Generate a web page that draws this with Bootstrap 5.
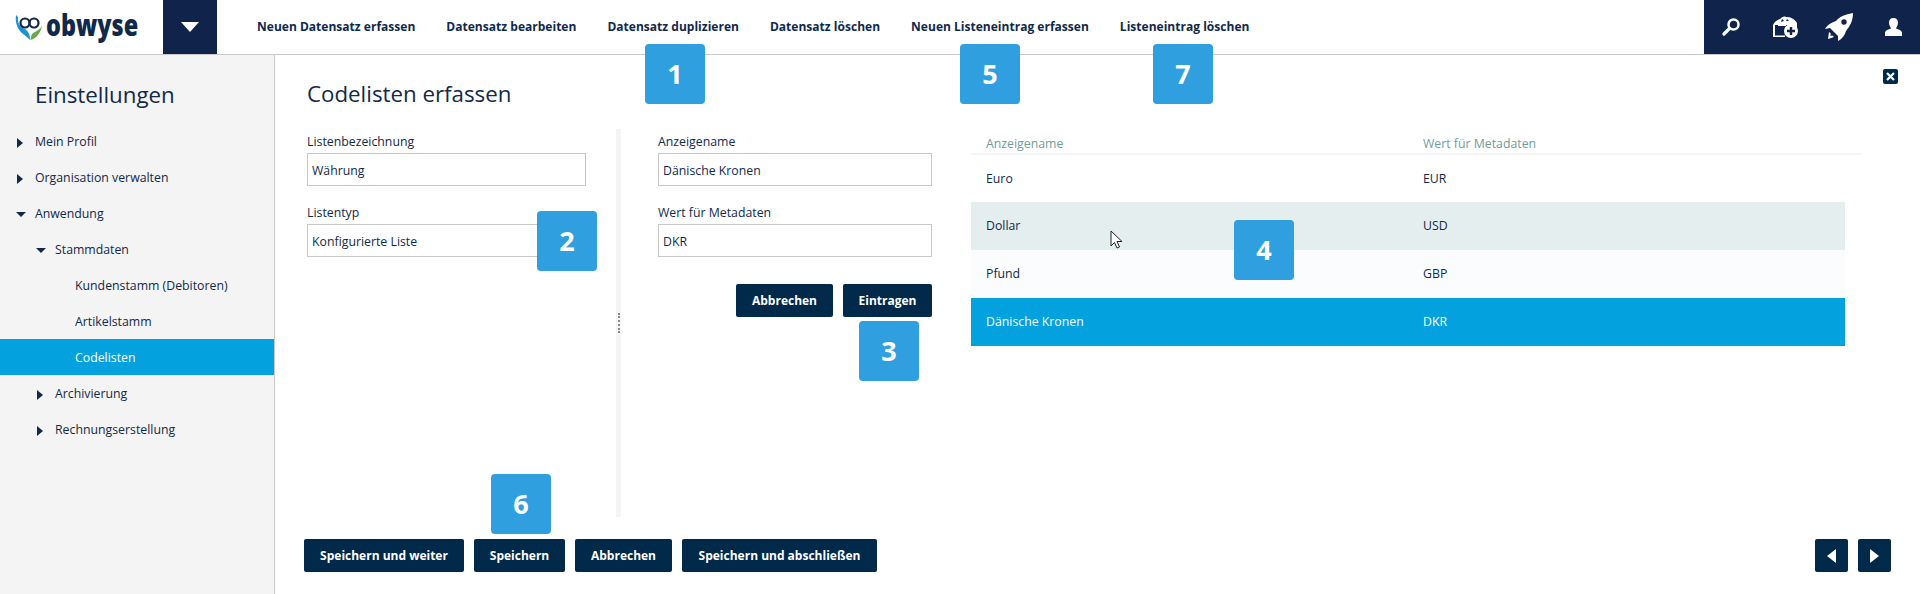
<!DOCTYPE html>
<html lang="de">
<head>
  <meta charset="UTF-8">
  <meta name="viewport" content="width=device-width, initial-scale=1">
  <title>Codelisten erfassen</title>
  <link href="https://cdn.jsdelivr.net/npm/bootstrap@5.3.2/dist/css/bootstrap.min.css" rel="stylesheet">
  <style>
    html, body { height: 594px; overflow: hidden; }
    body { font-family: "Open Sans", "Noto Sans", sans-serif; font-size: 12.3px; color: #12294a; background: #fff; }
    .top-bar { height: 55px; border-bottom: 1px solid #c8c8c8; }
    .logo-box { width: 163px; padding-left: 15px; }
    .logo-word { display: inline-block; font-weight: 800; font-size: 30px; color: #10294a; line-height: 1; margin: -4px 0 0 3px; transform: scaleX(.78); transform-origin: left center; }
    .menu-btn { width: 54px; height: 54px; background: #10234a; }
    .menu-btn i { border-left: 9px solid transparent; border-right: 9px solid transparent; border-top: 10px solid #fff; }
    .top-links { gap: 31px; padding-left: 40px; }
    .top-links a { font-size: 12px; font-weight: 700; color: #10294a; text-decoration: none; letter-spacing: .02px; }
    .tools { width: 216px; height: 54px; background: #10234a; padding-left: 18px; }
    .ic-box { margin-left: 32px; }
    .ic-rocket { margin-left: 26px; }
    .ic-user { margin-left: 31px; }
    .content-area { height: 539px; }
    .side { width: 275px; background: #f4f4f4; border-right: 1px solid #c8c8c8; }
    .side h2 { font-size: 22.3px; font-weight: 400; margin: 23px 0 11px 35px; line-height: 34px; }
    .tree-row { height: 36px; display: flex; align-items: center; padding-top: 3px; }
    .tree-row.l0 { padding-left: 35px; }
    .tree-row.l1 { padding-left: 55px; }
    .tree-row.l2 { padding-left: 75px; }
    .tree-row.on { background: #04a1df; color: #fff; }
    .tw-r, .tw-d { width: 0; height: 0; flex: none; display: block; }
    .tw-r { border-top: 5px solid transparent; border-bottom: 5px solid transparent; border-left: 6px solid #10294a; margin-left: -18px; margin-right: 12px; }
    .tw-d { border-left: 5px solid transparent; border-right: 5px solid transparent; border-top: 5px solid #10294a; margin-left: -19px; margin-right: 9px; }
    .work { position: relative; padding: 22px 0 0 32px; }
    .work h1 { font-size: 22.3px; font-weight: 400; line-height: 34px; margin: 0 0 21px; }
    .panes { height: 388px; }
    .pane-a { width: 279px; }
    .splitter { width: 5px; margin-left: 30px; margin-right: 37px; background: #f4f4f4; margin-top: -3px; height: 388px; position: relative; }
    .splitter i { position: absolute; left: 2px; top: 184px; height: 20px; border-left: 2px dotted #8a8a8a; }
    .pane-b { width: 274px; }
    .field-label { display: block; margin: 0 0 2px; padding-top: 1px; line-height: 18px; }
    .field-input.form-control { height: 33px; border: 1px solid #c8c8c8; border-radius: 0; padding: 1px 4px 0; font-size: 12.3px; color: #12294a; margin-bottom: 17px; }
    .entry-actions { gap: 10px; margin-top: 27px; }
    .dark-btn.btn { background: #00294a; border: 0; border-radius: 2px; color: #fff; font-size: 12px; font-weight: 700; height: 33px; padding: 0; }
    .w-cancel-a { width: 97px; }
    .w-enter { width: 89px; }
    .w-next { width: 160px; }
    .w-save { width: 91px; }
    .w-done { width: 195px; }
    .pane-c { width: 890px; margin-left: 39px; }
    .pane-c .table { width: 890px; margin: 0; table-layout: fixed; color: inherit; font-size: 12.3px; }
    .col-main { width: 437px; }
    .col-end { width: 16px; }
    .pane-c th { font-weight: 400; color: #6f9e9e; padding: 3px 0 0 15px; height: 22px; line-height: 18px; vertical-align: top; border: 0; border-bottom: 2px solid #f4f4f4; box-shadow: none; }
    .pane-c td { height: 48px; padding: 1px 0 0 15px; vertical-align: middle; border: 0; background: transparent; color: inherit; box-shadow: none; }
    .pane-c td.cell-end { padding: 0; background: #fff; }
    .row-hover td { background: #e5eeee; }
    .row-alt td { background: #fbfcfe; }
    .row-sel td { background: #04a1df; color: #fff; }
    .foot { position: absolute; left: 29px; right: 29px; top: 484px; }
    .foot-group { gap: 10px; }
    .pager { width: 33px; }
    .pager i { display: block; border-top: 7px solid transparent; border-bottom: 7px solid transparent; }
    .pager .prev { border-right: 9px solid #fff; }
    .pager .next { border-left: 9px solid #fff; }
    .close-x { position: absolute; top: 14px; right: 22px; width: 15px; height: 15px; background: #00294a; border-radius: 2px; }
    .step { position: absolute; width: 60px; height: 60px; background: #2f9fdf; color: #fff; border-radius: 4px; font-size: 27px; font-weight: 700; z-index: 5; }
    .step-1 { left: 645px; top: 44px; }
    .step-2 { left: 537px; top: 211px; }
    .step-3 { left: 859px; top: 321px; }
    .step-4 { left: 1234px; top: 220px; }
    .step-5 { left: 960px; top: 44px; }
    .step-6 { left: 491px; top: 474px; }
    .step-7 { left: 1153px; top: 44px; }
    .cursor-mark { position: absolute; left: 1110px; top: 230px; z-index: 6; }
  </style>
</head>
<body class="position-relative">

  <header class="top-bar d-flex">
    <div class="logo-box d-flex align-items-center">
      <svg width="28" height="27" viewBox="0 0 28 27" class="flex-shrink-0">
        <path d="M1 1C0 8 2 15 8 20c3 2 5 4 7 6 0-5-1-8-5-11C6 14 2 9 3 3z" fill="#1c93cf"/>
        <path d="M27 11c-1 5-7 6-10 9-1 2-1.500 4-1.500 6C20 25 26 20 27 11z" fill="#6aa84f"/>
        <circle cx="10" cy="9" r="4.500" fill="none" stroke="#10294a" stroke-width="2.200"/>
        <circle cx="19" cy="9" r="4.500" fill="none" stroke="#10294a" stroke-width="2.200"/>
      </svg>
      <span class="logo-word">obwyse</span>
    </div>
    <button class="menu-btn border-0 p-0 d-flex align-items-center justify-content-center" type="button"><i></i></button>
    <nav class="top-links nav flex-grow-1 align-items-center">
      <a href="#">Neuen Datensatz erfassen</a>
      <a href="#">Datensatz bearbeiten</a>
      <a href="#">Datensatz duplizieren</a>
      <a href="#">Datensatz löschen</a>
      <a href="#">Neuen Listeneintrag erfassen</a>
      <a href="#">Listeneintrag löschen</a>
    </nav>
    <div class="tools d-flex align-items-center">
      <svg width="18" height="18" viewBox="0 0 18 18"><circle cx="11.500" cy="6.500" r="5" fill="none" stroke="#fff" stroke-width="2.500"/><path d="M7.500 10.500L2 16" stroke="#fff" stroke-width="3.200" stroke-linecap="round"/></svg>
      <svg class="ic-box" width="27" height="22" viewBox="0 0 27 22">
        <path d="M1 9C2 6 5 4 8 3c2-2 4-3 6-2 4 0 8 1 11 6v5H3v9H1z" fill="#fff"/>
        <path d="M3 9h14v11H3z" fill="#10234a"/>
        <path d="M6 8.500h8v1.500H6zM3 19.500h10V21H3z" fill="#fff"/>
        <path d="M10 3l2 2-3 1zM15 3l2 2-3 0z" fill="#10234a"/>
        <circle cx="19" cy="15" r="7" fill="#fff"/>
        <path d="M19 11v8M15 15h8" stroke="#10234a" stroke-width="2.400"/>
      </svg>
      <svg class="ic-rocket" width="29" height="28" viewBox="0 0 29 28">
        <path d="M28 0C22 1 15 3 11 8 8 9 3 11 0 16l5-1 8 8 0 5c4-2 7-6 8-10 4-5 7-10 7-18z" fill="#fff"/>
        <circle cx="19" cy="9" r="2.700" fill="#10234a"/>
        <path d="M4 19l-1 7 6-2-1.500-1.500-2 .5.300-2.500z" fill="#fff"/>
      </svg>
      <svg class="ic-user" width="17" height="18" viewBox="0 0 17 18"><path d="M8.500 0c3 0 4.500 2 4.500 4.800S11.500 9 11 10.500c2 1 6 1.500 6 4.500v3H0v-3c0-3 4-3.500 6-4.500C5.500 9 4 7.600 4 4.800S5.500 0 8.500 0z" fill="#fff"/></svg>
    </div>
  </header>

  <div class="content-area d-flex">
    <aside class="side flex-shrink-0">
      <h2>Einstellungen</h2>
      <div class="tree-row l0"><span class="tw-r"></span>Mein Profil</div>
      <div class="tree-row l0"><span class="tw-r"></span>Organisation verwalten</div>
      <div class="tree-row l0"><span class="tw-d"></span>Anwendung</div>
      <div class="tree-row l1"><span class="tw-d"></span>Stammdaten</div>
      <div class="tree-row l2">Kundenstamm (Debitoren)</div>
      <div class="tree-row l2">Artikelstamm</div>
      <div class="tree-row l2 on">Codelisten</div>
      <div class="tree-row l1"><span class="tw-r"></span>Archivierung</div>
      <div class="tree-row l1"><span class="tw-r"></span>Rechnungserstellung</div>
    </aside>

    <main class="work flex-grow-1">
      <h1>Codelisten erfassen</h1>
      <div class="close-x d-flex align-items-center justify-content-center">
        <svg width="9" height="9" viewBox="0 0 9 9"><path d="M1 1l7 7M8 1L1 8" stroke="#fff" stroke-width="2.200"/></svg>
      </div>
      <div class="panes d-flex">
        <div class="pane-a">
          <label class="field-label">Listenbezeichnung</label>
          <input class="form-control field-input" value="Währung">
          <label class="field-label">Listentyp</label>
          <input class="form-control field-input" value="Konfigurierte Liste">
        </div>
        <div class="splitter"><i></i></div>
        <div class="pane-b">
          <label class="field-label">Anzeigename</label>
          <input class="form-control field-input" value="Dänische Kronen">
          <label class="field-label">Wert für Metadaten</label>
          <input class="form-control field-input" value="DKR">
          <div class="entry-actions d-flex justify-content-end">
            <button class="btn dark-btn w-cancel-a">Abbrechen</button>
            <button class="btn dark-btn w-enter">Eintragen</button>
          </div>
        </div>
        <div class="pane-c">
          <table class="table">
            <colgroup><col class="col-main"><col class="col-main"><col class="col-end"></colgroup>
            <thead><tr><th>Anzeigename</th><th>Wert für Metadaten</th><th></th></tr></thead>
            <tbody>
              <tr><td>Euro</td><td>EUR</td><td class="cell-end"></td></tr>
              <tr class="row-hover"><td>Dollar</td><td>USD</td><td class="cell-end"></td></tr>
              <tr class="row-alt"><td>Pfund</td><td>GBP</td><td class="cell-end"></td></tr>
              <tr class="row-sel"><td>Dänische Kronen</td><td>DKR</td><td class="cell-end"></td></tr>
            </tbody>
          </table>
        </div>
      </div>
      <div class="foot d-flex justify-content-between">
        <div class="foot-group d-flex">
          <button class="btn dark-btn w-next">Speichern und weiter</button>
          <button class="btn dark-btn w-save">Speichern</button>
          <button class="btn dark-btn w-cancel-a">Abbrechen</button>
          <button class="btn dark-btn w-done">Speichern und abschließen</button>
        </div>
        <div class="foot-group d-flex">
          <button class="btn dark-btn pager d-flex align-items-center justify-content-center"><i class="prev"></i></button>
          <button class="btn dark-btn pager d-flex align-items-center justify-content-center"><i class="next"></i></button>
        </div>
      </div>
    </main>
  </div>

  <div class="step step-1 d-flex align-items-center justify-content-center">1</div>
  <div class="step step-2 d-flex align-items-center justify-content-center">2</div>
  <div class="step step-3 d-flex align-items-center justify-content-center">3</div>
  <div class="step step-4 d-flex align-items-center justify-content-center">4</div>
  <div class="step step-5 d-flex align-items-center justify-content-center">5</div>
  <div class="step step-6 d-flex align-items-center justify-content-center">6</div>
  <div class="step step-7 d-flex align-items-center justify-content-center">7</div>

  <svg class="cursor-mark" width="14" height="20" viewBox="0 0 14 20"><path d="M1 1v15l3.500-3.500L7 18l2.500-1L7 11.500h5z" fill="#fff" stroke="#222" stroke-width="1"/></svg>

  <script src="https://cdn.jsdelivr.net/npm/bootstrap@5.3.2/dist/js/bootstrap.bundle.min.js"></script>
</body>
</html>
